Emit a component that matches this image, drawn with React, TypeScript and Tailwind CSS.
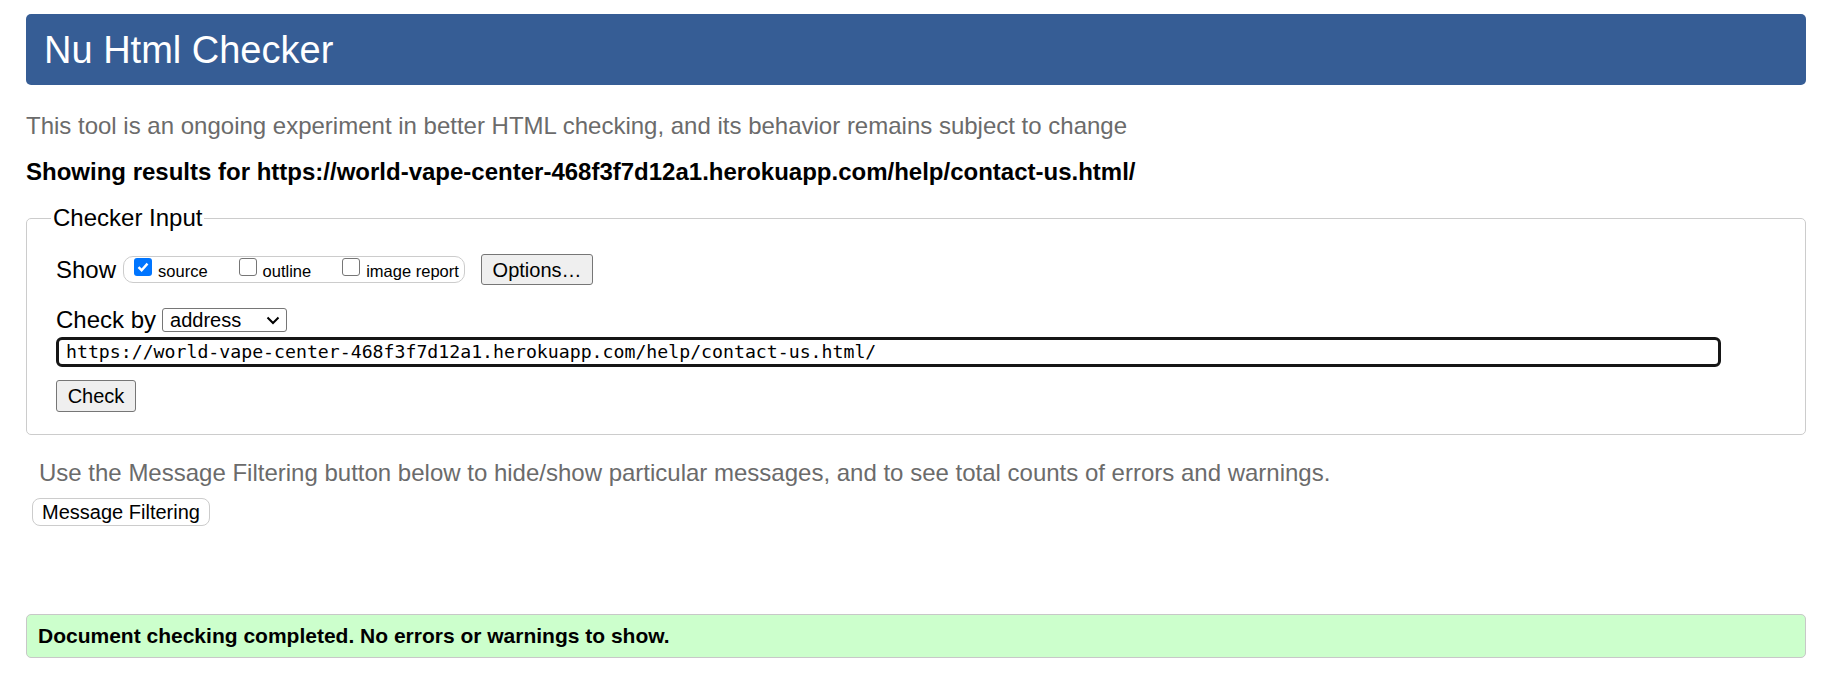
export default function App() {
  const url = 'https://world-vape-center-468f3f7d12a1.herokuapp.com/help/contact-us.html/'

  return (
    <div className="min-h-screen bg-white font-['Liberation_Sans',Arial,sans-serif] text-[24px] leading-[28px] text-black">
      <div className="ml-[26px] w-[1780px] pt-[14px]">
        <header className="flex h-[71px] items-center rounded-[5px] bg-[#365d95] pl-[18px]">
          <h1 className="text-[38px] leading-[44px] text-white">Nu Html Checker</h1>
        </header>

        <p className="mt-[27px] text-[#6b6b6b]">
          This tool is an ongoing experiment in better HTML checking, and its behavior remains subject to change
        </p>
        <p className="mt-[18px] font-bold">Showing results for {url}</p>

        <fieldset className="mt-[18px] rounded-[5px] border border-[#cccccc] pb-[22px] pl-[29px]">
          <legend className="-ml-[5px] px-[2px]">Checker Input</legend>

          <div className="mt-[22px] flex h-[31px] items-center">
            <span>Show</span>
            <div className="ml-[7px] flex h-[27px] w-[342px] items-center rounded-[10px] border border-[#cccccc] pl-[10px] text-[16.5px] leading-[19px]">
              <span className="mb-[6px] flex h-[18px] w-[18px] items-center justify-center rounded-[3px] bg-[#0075ff]">
                <svg width="14" height="14" viewBox="0 0 14 14" fill="none">
                  <path d="M2.5 7.2 L5.6 10.2 L11.5 3.6" stroke="white" strokeWidth="2.4" />
                </svg>
              </span>
              <span className="ml-[6px] mt-[4px]">source</span>
              <span className="mb-[6px] ml-[31px] h-[18px] w-[18px] rounded-[3px] border border-[#767676] bg-white" />
              <span className="ml-[6px] mt-[4px]">outline</span>
              <span className="mb-[6px] ml-[31px] h-[18px] w-[18px] rounded-[3px] border border-[#767676] bg-white" />
              <span className="ml-[6px] mt-[4px]">image report</span>
            </div>
            <button className="ml-[16px] h-[31px] w-[112px] rounded-[3px] border border-[#767676] bg-[#efefef] text-[20px] leading-[24px]">
              Options…
            </button>
          </div>

          <div className="mt-[21px] flex h-[28px] items-center">
            <span>Check by</span>
            <div className="ml-[6px] flex h-[24px] w-[125px] items-center justify-between rounded-[3px] border border-[#767676] pl-[7px] pr-[6px] text-[20px] leading-[22px]">
              <span>address</span>
              <svg width="14" height="9" viewBox="0 0 14 9" fill="none">
                <path d="M1.5 1.5 L7 7 L12.5 1.5" stroke="black" strokeWidth="2" />
              </svg>
            </div>
          </div>

          <div className="mt-[3px] flex h-[30px] w-[1665px] items-center rounded-[6px] border-[3px] border-[#161616] pl-[7px] font-['DejaVu_Sans_Mono',monospace] text-[18.2px] leading-[22px]">
            {url}
          </div>

          <button className="mt-[13px] h-[32px] w-[80px] rounded-[3px] border border-[#767676] bg-[#efefef] text-[20px] leading-[24px]">
            Check
          </button>
        </fieldset>

        <p className="ml-[13px] mt-[24px] text-[#6b6b6b]">
          Use the Message Filtering button below to hide/show particular messages, and to see total counts of errors and warnings.
        </p>
        <button className="ml-[6px] mt-[11px] h-[28px] w-[178px] rounded-[8px] border border-[#cccccc] bg-white text-[20px] leading-[24px]">
          Message Filtering
        </button>

        <div className="mt-[88px] flex h-[44px] items-center rounded-[5px] border border-[#c8c8c8] bg-[#ccffcc] pl-[11px] text-[21px] font-bold">
          Document checking completed. No errors or warnings to show.
        </div>
      </div>
    </div>
  )
}
